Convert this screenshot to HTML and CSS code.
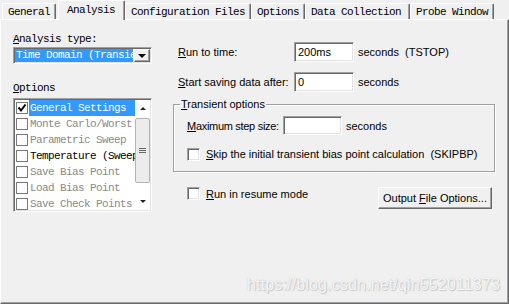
FILE: index.html
```html
<!DOCTYPE html>
<html>
<head>
<meta charset="utf-8">
<link rel="stylesheet" href="styles.css">
</head>
<body>
<div class="window">
  <div class="tabs">
    <div class="tab">General</div>
    <div class="tab active">Analysis</div>
    <div class="tab">Configuration Files</div>
    <div class="tab tab-opt">Options</div>
    <div class="tab tab-data">Data Collection</div>
    <div class="tab tab-probe">Probe Window</div>
  </div>
  <div class="panel">
    <div class="left">
      <div class="mlabel"><u>A</u>nalysis type:</div>
      <div class="combo">
        <div class="combo-value">Time Domain (Transient)</div>
        <div class="combo-btn"><span class="tri-down"></span></div>
      </div>
      <div class="mlabel options-label"><u>O</u>ptions</div>
      <div class="list">
        <div class="items">
          <div class="item"><span class="lbox checked"><svg width="10" height="10" viewBox="0 0 10 10"><path d="M1.5 4.5 L4 7.5 L8.5 1.5" fill="none" stroke="#000" stroke-width="2"/></svg></span><span class="itext selected">General Settings</span></div>
          <div class="item"><span class="lbox"></span><span class="itext dim">Monte Carlo/Worst Case</span></div>
          <div class="item"><span class="lbox"></span><span class="itext dim">Parametric Sweep</span></div>
          <div class="item"><span class="lbox"></span><span class="itext">Temperature (Sweep)</span></div>
          <div class="item"><span class="lbox"></span><span class="itext dim">Save Bias Point</span></div>
          <div class="item"><span class="lbox"></span><span class="itext dim">Load Bias Point</span></div>
          <div class="item"><span class="lbox"></span><span class="itext dim">Save Check Points</span></div>
        </div>
        <div class="scrollbar">
          <div class="sb-arrow"><span class="tri-up-s"></span></div>
          <div class="sb-thumb"><span class="grip"></span></div>
          <div class="sb-space"></div>
          <div class="sb-arrow"><span class="tri-down-s"></span></div>
        </div>
      </div>
    </div>
    <div class="right">
      <div class="row">
        <span class="row-label"><u>R</u>un to time:</span>
        <span class="input">200ms</span>
        <span class="unit">seconds&nbsp; (TSTOP)</span>
      </div>
      <div class="row row2">
        <span class="row-label"><u>S</u>tart saving data after:</span>
        <span class="input">0</span>
        <span class="unit">seconds</span>
      </div>
      <fieldset class="group">
        <legend><u>T</u>ransient options</legend>
        <div class="group-body">
          <div class="grow">
            <span class="grow-label"><u>M</u>aximum step size:</span>
            <span class="input input-small"></span>
            <span class="unit">seconds</span>
          </div>
          <div class="crow">
            <span class="cbox"></span>
            <span class="ctext"><u>S</u>kip the initial transient bias point calculation&nbsp; (SKIPBP)</span>
          </div>
        </div>
      </fieldset>
      <div class="bottom-row">
        <span class="cbox"></span>
        <span class="ctext"><u>R</u>un in resume mode</span>
        <button class="btn">Output <u>F</u>ile Options...</button>
      </div>
    </div>
    <div class="watermark">https://blog.csdn.net/qin552011373</div>
  </div>
</div>
</body>
</html>
```

FILE: styles.css
```css
* { box-sizing: border-box; }
html, body { margin: 0; padding: 0; background: #f0f0f0; }
.window {
  width: 509px;
  height: 304px;
  background: #f0f0f0;
  overflow: hidden;
  font-family: "Liberation Sans", Arial, sans-serif;
  font-size: 11px;
  color: #000;
}
u { text-decoration: underline; text-underline-offset: 1px; }

/* tabs */
.tabs {
  display: flex;
  align-items: flex-end;
  height: 19px;
  padding-left: 2px;
  position: relative;
  z-index: 2;
}
.tab {
  height: 16px;
  line-height: 16px;
  padding: 0 5px;
  font-family: "Liberation Mono", monospace;
  font-size: 11px;
  letter-spacing: -0.6px;
  white-space: nowrap;
  border-top: 1px solid #fff;
  border-left: 1px solid #fff;
  border-right: 1px solid #696969;
  box-shadow: inset -1px 0 0 #a0a0a0;
  border-radius: 2px 2px 0 0;
  background: #f0f0f0;
}
.tab.active {
  height: 20px;
  line-height: 18px;
  margin-bottom: -1px;
  margin-left: 2px;
  padding: 0 9px 0 8px;
}
.tab-opt { padding: 0 5px 0 5px; }
.tab-data { padding: 0 8px 0 5px; }
.tab-probe { padding: 0 5px; }

/* panel */
.panel {
  position: relative;
  height: 285px;
  display: flex;
  border-top: 1px solid #fff;
  border-left: 1px solid #fff;
  border-right: 1px solid #696969;
  border-bottom: 1px solid #696969;
  box-shadow: inset -1px -1px 0 #a0a0a0;
}

/* left column */
.left {
  width: 171px;
  flex: none;
  padding: 13px 0 0 12px;
}
.mlabel {
  font-family: "Liberation Mono", monospace;
  font-size: 11px;
  letter-spacing: -0.6px;
  line-height: 12px;
  height: 12px;
}
.combo {
  margin-top: 2px;
  width: 139px;
  height: 17px;
  display: flex;
  background: #fff;
  border: 1px solid;
  border-color: #a0a0a0 #fff #fff #a0a0a0;
  box-shadow: inset 1px 1px 0 #696969, inset -1px -1px 0 #e3e3e3;
  padding: 1px 1px 1px 1px;
}
.combo-value {
  flex: 1;
  min-width: 0;
  overflow: hidden;
  white-space: nowrap;
  background: #3399ff;
  color: #fff;
  font-family: "Liberation Mono", monospace;
  font-size: 11px;
  letter-spacing: -0.6px;
  line-height: 13px;
  padding-left: 1px;
  margin-right: 1px;
}
.combo-btn {
  width: 16px;
  flex: none;
  display: flex;
  align-items: center;
  justify-content: center;
  background: #f0f0f0;
  border: 1px solid;
  border-color: #fff #696969 #696969 #fff;
  box-shadow: inset -1px -1px 0 #a0a0a0;
}
.tri-down {
  width: 0; height: 0;
  border-left: 4px solid transparent;
  border-right: 4px solid transparent;
  border-top: 4px solid #000;
}
.options-label { margin-top: 18px; }
.list {
  margin-top: 4px;
  width: 139px;
  height: 114px;
  display: flex;
  overflow: hidden;
  background: #fff;
  border: 1px solid;
  border-color: #a0a0a0 #fff #fff #a0a0a0;
  box-shadow: inset 1px 1px 0 #696969, inset -1px -1px 0 #e3e3e3;
  padding: 1px 1px 1px 1px;
}
.items {
  flex: 1;
  min-width: 0;
  overflow: hidden;
}
.item {
  height: 16px;
  display: flex;
  align-items: center;
  padding-left: 1px;
}
.lbox {
  width: 12px;
  height: 12px;
  flex: none;
  border: 1px solid #7a7a7a;
  background: #fcfcfc;
  display: flex;
  align-items: center;
  justify-content: center;
}
.itext {
  flex: 1;
  margin-left: 1px;
  height: 16px;
  line-height: 16px;
  white-space: nowrap;
  overflow: hidden;
  font-family: "Liberation Mono", monospace;
  font-size: 11px;
  letter-spacing: -0.6px;
  padding-left: 1px;
}
.itext.selected { background: #3399ff; color: #fff; }
.itext.dim { color: #8a8a8a; }
.scrollbar {
  width: 15px;
  flex: none;
  display: flex;
  flex-direction: column;
  background: #fff;
}
.sb-arrow {
  height: 17px;
  display: flex;
  align-items: center;
  justify-content: center;
}
.tri-up-s {
  width: 0; height: 0;
  border-left: 3px solid transparent;
  border-right: 3px solid transparent;
  border-bottom: 3px solid #222;
}
.tri-down-s {
  width: 0; height: 0;
  border-left: 3px solid transparent;
  border-right: 3px solid transparent;
  border-top: 3px solid #222;
}
.sb-thumb {
  margin: 1px 0 0 0;
  height: 65px;
  background: #ececec;
  border: 1px solid #b4b4b4;
  border-radius: 2px;
  display: flex;
  align-items: center;
  justify-content: center;
}
.grip {
  width: 7px;
  height: 5px;
  border-top: 1px solid #666;
  border-bottom: 1px solid #666;
  background: linear-gradient(#666, #666) center / 7px 1px no-repeat;
}
.sb-space { flex: 1; }

/* right column */
.right {
  flex: 1;
  padding-top: 22px;
}
.row {
  display: flex;
  align-items: center;
  height: 20px;
  padding-left: 6px;
  white-space: nowrap;
}
.row2 { margin-top: 10px; }
.row-label { width: 116px; flex: none; }
.input {
  width: 60px;
  height: 20px;
  flex: none;
  background: #fff;
  border: 1px solid;
  border-color: #a0a0a0 #fff #fff #a0a0a0;
  box-shadow: inset 1px 1px 0 #696969, inset -1px -1px 0 #e3e3e3;
  padding-left: 3px;
  line-height: 18px;
}
.unit { margin-left: 4px; }
.group {
  margin: 6px 13px 0 1px;
  padding: 0 0 10px 0;
  min-width: 0;
  border: 1px solid #a0a0a0;
  box-shadow: 1px 1px 0 #fff, inset 1px 1px 0 #fff;
}
.group legend {
  margin-left: 6px;
  padding: 0 1px;
  line-height: 13px;
}
.group-body { padding-left: 13px; }
.grow {
  margin-top: 5px;
  display: flex;
  align-items: center;
  height: 19px;
  white-space: nowrap;
}
.grow-label { width: 96px; flex: none; letter-spacing: -0.3px; }
.input-small { width: 59px; height: 19px; }
.crow {
  margin-top: 13px;
  display: flex;
  align-items: center;
  height: 13px;
  white-space: nowrap;
}
.cbox {
  width: 13px;
  height: 13px;
  flex: none;
  background: #fff;
  border: 1px solid;
  border-color: #a0a0a0 #fff #fff #a0a0a0;
  box-shadow: inset 1px 1px 0 #696969, inset -1px -1px 0 #e3e3e3;
}
.ctext { margin-left: 6px; line-height: 13px; }
.bottom-row {
  margin-top: 15px;
  display: flex;
  align-items: flex-start;
  padding-left: 15px;
  white-space: nowrap;
}
.bottom-row .ctext { margin-top: 1px; }
.btn {
  margin-left: auto;
  margin-right: 16px;
  width: 114px;
  height: 22px;
  padding: 0;
  font-family: "Liberation Sans", Arial, sans-serif;
  font-size: 11px;
  color: #000;
  background: #f0f0f0;
  border: 1px solid;
  border-color: #fff #696969 #696969 #fff;
  box-shadow: inset -1px -1px 0 #a0a0a0;
  border-radius: 0;
}

/* watermark overlay */
.watermark {
  position: absolute;
  right: 8px;
  bottom: 9px;
  font-family: "Liberation Sans", Arial, sans-serif;
  font-size: 16px;
  letter-spacing: 0.15px;
  color: #f7f7f7;
  text-shadow: 0 0 1px #b8b8b8, 1px 1px 1px #c8c8c8;
}
```
